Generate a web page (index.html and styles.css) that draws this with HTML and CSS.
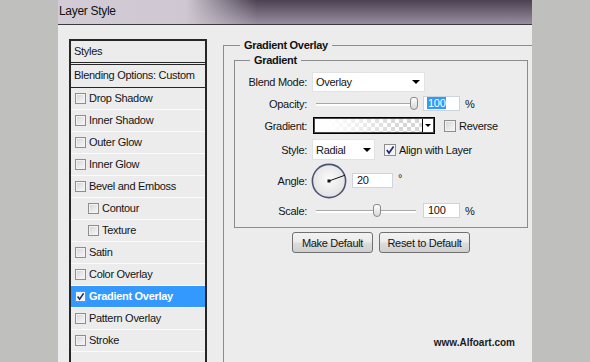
FILE: index.html
```html
<!DOCTYPE html>
<html>
<head>
<meta charset="utf-8">
<link rel="stylesheet" href="styles.css">
</head>
<body>
<div class="screen">
  <div class="side"></div>
  <div class="dialog">
    <div class="titlebar">Layer Style</div>
    <div class="dlg-body">
      <ul class="styles-list">
        <li class="hdr styles-title">Styles</li>
        <li class="hdr blend">Blending Options: Custom</li>
        <li class="item"><span class="cb"></span>Drop Shadow</li>
        <li class="item"><span class="cb"></span>Inner Shadow</li>
        <li class="item"><span class="cb"></span>Outer Glow</li>
        <li class="item"><span class="cb"></span>Inner Glow</li>
        <li class="item"><span class="cb"></span>Bevel and Emboss</li>
        <li class="item sub"><span class="cb"></span>Contour</li>
        <li class="item sub"><span class="cb"></span>Texture</li>
        <li class="item"><span class="cb"></span>Satin</li>
        <li class="item"><span class="cb"></span>Color Overlay</li>
        <li class="item active"><span class="cb checked"><svg viewBox="0 0 9 9" width="9" height="9"><path d="M1.6 4.6 L3.6 7.2 L7.6 1.4" fill="none" stroke="#1d2c72" stroke-width="1.6"/></svg></span>Gradient Overlay</li>
        <li class="item"><span class="cb"></span>Pattern Overlay</li>
        <li class="item"><span class="cb"></span>Stroke</li>
      </ul>
      <div class="settings">
        <fieldset class="grp outer">
          <legend>Gradient Overlay</legend>
          <fieldset class="grp inner">
            <legend>Gradient</legend>
            <div class="row r1">
              <span class="lbl">Blend Mode:</span>
              <div class="select blend-sel"><span>Overlay</span><span class="tri"></span></div>
            </div>
            <div class="row r2">
              <span class="lbl">Opacity:</span>
              <div class="slider"><span class="thumb" style="left:94px"></span></div>
              <div class="num"><span class="sel">100</span></div>
              <span class="unit">%</span>
            </div>
            <div class="row r3">
              <span class="lbl">Gradient:</span>
              <div class="grad"><div class="grad-fill"></div><div class="grad-arrow"><span class="tri"></span></div></div>
              <label class="chk-lbl"><span class="cb big"></span>Reverse</label>
            </div>
            <div class="row r4">
              <span class="lbl">Style:</span>
              <div class="select style-sel"><span>Radial</span><span class="tri"></span></div>
              <label class="chk-lbl"><span class="cb big checked"><svg viewBox="0 0 10 10" width="10" height="10"><path d="M1.8 5 L4 8 L8.6 1.4" fill="none" stroke="#1d2c72" stroke-width="1.7"/></svg></span>Align with Layer</label>
            </div>
            <div class="row r5">
              <span class="lbl">Angle:</span>
              <svg class="dial" viewBox="0 0 36 36" width="36" height="36">
                <defs>
                  <radialGradient id="dg" cx="50%" cy="45%" r="55%">
                    <stop offset="0" stop-color="#fbfbfb"/>
                    <stop offset="1" stop-color="#e2e2e2"/>
                  </radialGradient>
                </defs>
                <circle cx="18" cy="18" r="16.6" fill="url(#dg)" stroke="#4b5475" stroke-width="1.6"/>
                <line x1="18" y1="18" x2="34" y2="12.2" stroke="#111" stroke-width="1"/>
                <rect x="16.5" y="16.5" width="3" height="3" fill="#111"/>
              </svg>
              <div class="num angle"><span>20</span></div>
              <span class="deg">°</span>
            </div>
            <div class="row r6">
              <span class="lbl">Scale:</span>
              <div class="slider"><span class="thumb" style="left:57px"></span></div>
              <div class="num"><span>100</span></div>
              <span class="unit">%</span>
            </div>
          </fieldset>
          <div class="buttons">
            <button class="btn btn-make">Make Default</button>
            <button class="btn btn-reset">Reset to Default</button>
          </div>
        </fieldset>
      </div>
    </div>
    <div class="watermark">www.Alfoart.com</div>
  </div>
  <div class="side"></div>
</div>
</body>
</html>
```

FILE: styles.css
```css
* { box-sizing: border-box; margin: 0; padding: 0; }
html, body { width: 590px; height: 362px; overflow: hidden; }
body {
  font-family: "Liberation Sans", Arial, sans-serif;
  font-size: 11px;
  letter-spacing: -0.3px;
  color: #141414;
  background: #bfc0be;
}
.screen { display: flex; height: 362px; }
.side { width: 58px; flex: none; background: #bfc0be; }
.dialog {
  width: 474px; flex: none; background: #ececec;
  display: flex; flex-direction: column;
  position: relative; overflow: hidden;
}
.titlebar {
  height: 25px; flex: none;
  border-bottom: 1px solid #3b3b3e;
  padding-left: 1px;
  font-size: 12px; line-height: 22px; color: #111;
  background:
    linear-gradient(to right, #d3ccd6 0%, #cfc7d1 27%, rgba(205,196,207,0) 42%),
    linear-gradient(to bottom, #4a4151 0%, #6d6374 45%, #988d9e 100%);
}
.dlg-body { flex: 1; display: flex; align-items: flex-start; padding-left: 11px; min-height: 0; }

.styles-list {
  list-style: none; width: 138px; flex: none;
  margin-top: 14px; align-self: stretch;
  border: 2px solid #262626; border-bottom: none;
}
.hdr { padding-left: 3px; }
.styles-title { height: 24px; line-height: 20px; border-bottom: 3px double #262626; }
.blend { height: 23px; line-height: 21px; border-bottom: 1px solid #262626; }
.item {
  height: 22px; border-bottom: 1px solid #fbfbfb;
  display: flex; align-items: center; gap: 3px; padding-left: 4px;
  padding-bottom: 1px;
}
.item.sub { padding-left: 17px; }
.item.active { background: #3399ff; color: #fff; font-weight: bold; }

.cb {
  width: 11px; height: 11px; flex: none;
  border: 1px solid #8e8e8e;
  background: linear-gradient(135deg, #d3d3d3 0%, #e9e9e9 55%, #f8f8f8 100%);
  box-shadow: inset 0 0 0 1px #f2f2f2;
  display: flex; align-items: center; justify-content: center;
}
.cb.big { width: 12px; height: 12px; }
.cb.checked { background: #f6f6f6; box-shadow: none; }
.cb svg { display: block; }

.settings { margin-left: 16px; margin-top: 13px; }
.grp { border: 1px solid #8c8c8c; }
.grp > legend { font-weight: bold; line-height: 14px; padding: 0 4px; color: #111; }
.outer { border-right: none; border-bottom: none; width: 330px; height: 400px; }
.outer > legend { margin-left: 16px; }
.inner { margin-left: 10px; margin-top: 1px; width: 294px; padding: 5px 0 9px 0; }
.inner > legend { margin-left: 15px; }

.row { display: flex; align-items: center; }
.lbl { width: 72px; flex: none; text-align: right; margin-right: 5px; }
.r1 { height: 20px; }
.r2 { height: 15px; margin-top: 4px; }
.r3 { height: 17px; margin-top: 6px; }
.r4 { height: 21px; margin-top: 5px; }
.r5 { height: 35px; margin-top: 3px; }
.r6 { height: 15px; margin-top: 5px; }

.select {
  background: #fff; border: 1px solid #e2e2e2;
  display: flex; align-items: center; justify-content: space-between;
  padding: 0 3px 0 3px;
}
.blend-sel { width: 113px; height: 20px; padding-right: 4px; }
.style-sel { width: 63px; height: 21px; padding-right: 3px; }
.tri {
  width: 0; height: 0;
  border-top: 4px solid #000;
  border-left: 4px solid transparent;
  border-right: 4px solid transparent;
}

.slider { position: relative; width: 100px; height: 15px; margin-left: 4px; }
.slider::before {
  content: ""; position: absolute; left: 0; right: 0; top: 7px; height: 2px;
  border-top: 1px solid #a8a8a8; background: #fff;
}
.thumb {
  position: absolute; top: 1px; width: 8px; height: 13px;
  border: 1px solid #8a8a8a; border-radius: 3px 3px 4px 4px;
  background: linear-gradient(to bottom, #fdfdfd, #d8d8d8);
}
.num {
  width: 37px; height: 15px; margin-left: 7px;
  background: #fff; border: 1px solid #ccd5de;
  padding-left: 4px; line-height: 13px;
}
.sel { background: #3399ff; color: #fff; padding: 0 1px; margin-left: -1px; }
.unit { margin-left: 5px; }

.grad {
  margin-left: 1px; width: 122px; height: 17px;
  border: 1px solid #000; box-shadow: inset 0 0 0 1px #4a4a4a;
  display: flex;
}
.grad-fill {
  flex: 1; margin: 1px 0 1px 1px;
  background:
    linear-gradient(to right, #fff 0%, rgba(255,255,255,0.95) 15%, rgba(255,255,255,0) 80%),
    repeating-conic-gradient(#d6d6d6 0 25%, #fff 0 50%) 0 0 / 8px 8px;
}
.grad-arrow {
  width: 11px; flex: none; border-left: 1px solid #000; background: #fff;
  margin: 1px 1px 1px 0;
  display: flex; align-items: center; justify-content: center;
}
.grad-arrow .tri { border-top-width: 3px; border-left-width: 3px; border-right-width: 3px; }
.chk-lbl { display: flex; align-items: center; gap: 3px; margin-left: 9px; }

.dial { display: block; flex: none; margin-left: -1px; }
.num.angle { width: 41px; margin-left: 5px; }
.deg { margin-left: 5px; align-self: flex-start; margin-top: 9px; }

.buttons { display: flex; justify-content: center; gap: 6px; width: 294px; margin-left: 10px; margin-top: 4px; }
.btn {
  height: 21px; border: 1px solid #707070; border-radius: 3px;
  font-family: inherit; font-size: 11px; letter-spacing: -0.3px; color: #141414;
  background: linear-gradient(to bottom, #f3f3f3 0%, #ebebeb 48%, #dddddd 52%, #cfcfcf 100%);
}
.btn-make { width: 81px; }
.btn-reset { width: 91px; }

.watermark {
  position: absolute; right: 17px; top: 337px;
  font-size: 10px; font-weight: bold; letter-spacing: 0; color: #1a1a1a;
}
```
